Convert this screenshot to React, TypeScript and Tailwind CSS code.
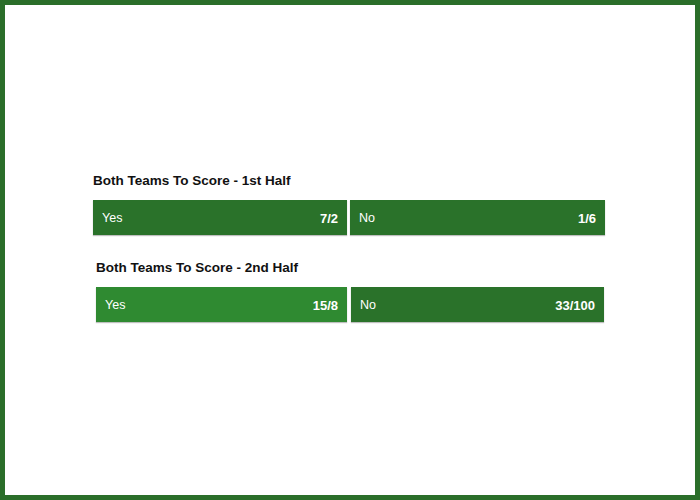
const OddsButton = ({ label, odds, color, width }: { label: string; odds: string; color: string; width: string }) => {
    return (
        <div
            className={`${width} ${color} h-[35px] flex items-center justify-between px-[9px] pt-[2px] text-white shadow-[0_1px_1px_rgba(0,0,0,0.25)]`}
        >
            <span className="text-[12.5px]">{label}</span>
            <span className="text-[13px] font-bold">{odds}</span>
        </div>
    );
};

export default function App() {
    return (
        <div
            className="w-[700px] h-[500px] border-[5px] border-[#2b6e2a] bg-white pt-[166px]"
            style={{ fontFamily: '"Liberation Sans", Arial, sans-serif' }}
        >
            <div className="ml-[88px] w-[512px]">
                <h2 className="text-[13.5px] font-bold leading-[20px] text-[#111]">Both Teams To Score - 1st Half</h2>
                <div className="mt-[9px] flex gap-[3px]">
                    <OddsButton label="Yes" odds="7/2" color="bg-[#2a722a]" width="w-[254px]" />
                    <OddsButton label="No" odds="1/6" color="bg-[#2a722a]" width="w-[255px]" />
                </div>
            </div>
            <div className="ml-[91px] mt-[23px] w-[508px]">
                <h2 className="text-[13.5px] font-bold leading-[20px] text-[#111]">Both Teams To Score - 2nd Half</h2>
                <div className="mt-[9px] flex gap-[4px]">
                    <OddsButton label="Yes" odds="15/8" color="bg-[#2f8a31]" width="w-[251px]" />
                    <OddsButton label="No" odds="33/100" color="bg-[#2a722a]" width="w-[253px]" />
                </div>
            </div>
        </div>
    );
}
